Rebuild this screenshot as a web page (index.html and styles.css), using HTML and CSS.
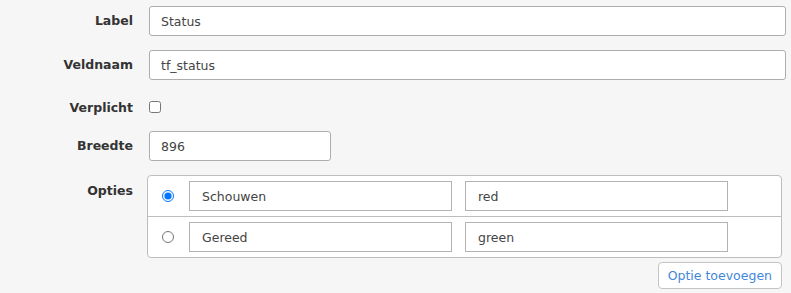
FILE: index.html
```html
<!DOCTYPE html>
<html lang="nl">
<head>
    <meta charset="UTF-8">
    <title>Veld bewerken</title>
    <link rel="stylesheet" href="styles.css">
</head>
<body>

    <form class="field-form">
        <label class="form-label" for="label">Label</label>
        <div class="form-control">
            <input id="label" class="text-input" type="text" value="Status">
        </div>

        <label class="form-label" for="veldnaam">Veldnaam</label>
        <div class="form-control">
            <input id="veldnaam" class="text-input" type="text" value="tf_status">
        </div>

        <label class="form-label check-label" for="verplicht">Verplicht</label>
        <div class="form-control check-control">
            <input id="verplicht" class="checkbox" type="checkbox">
        </div>

        <label class="form-label" for="breedte">Breedte</label>
        <div class="form-control">
            <input id="breedte" class="text-input small" type="text" value="896">
        </div>

        <div class="form-label options-label">Opties</div>
        <div class="form-control">
            <div class="options-box">
                <div class="option-row">
                    <input class="radio" type="radio" name="default" checked>
                    <input class="option-input" type="text" value="Schouwen">
                    <input class="option-input" type="text" value="red">
                </div>
                <div class="option-row">
                    <input class="radio" type="radio" name="default">
                    <input class="option-input" type="text" value="Gereed">
                    <input class="option-input" type="text" value="green">
                </div>
            </div>
            <div class="options-actions">
                <button type="button" class="btn-add">Optie toevoegen</button>
            </div>
        </div>
    </form>

</body>
</html>
```

FILE: styles.css
```css
/* Algemeen */
body {
    margin: 0;
    background: #f6f6f6;
    font-family: "DejaVu Sans", Verdana, sans-serif;
    font-size: 12.5px;
    color: #333;
}

/* Formulier */
.field-form {
    display: grid;
    grid-template-columns: 133px 1fr;
    column-gap: 16px;
    row-gap: 14px;
    padding: 6px 5px 0 0;
}

.form-label {
    font-weight: bold;
    text-align: right;
    line-height: 30px;
    color: #333;
}

.check-label {
    line-height: 15px;
    padding: 6px 0 2px;
}

.options-label {
    line-height: 15px;
    padding-top: 8px;
}

.form-control {
    min-width: 0;
}

.check-control {
    height: 23px;
    display: flex;
    align-items: flex-start;
}

/* Invoervelden */
.text-input {
    box-sizing: border-box;
    width: 100%;
    height: 30px;
    margin: 0;
    padding: 0 11px;
    border: 1px solid #adadad;
    border-radius: 3px;
    background: #fff;
    font-family: inherit;
    font-size: 12.5px;
    color: #444;
}

.text-input.small {
    width: 182px;
}

.checkbox {
    width: 12px;
    height: 12px;
    margin: 7px 0 0 0;
}

/* Opties */
.options-box {
    margin: 0 4px 0 -2px;
    border: 1px solid #bdbdbd;
    border-radius: 4px;
    background: #fff;
}

.option-row {
    display: flex;
    align-items: center;
    height: 40px;
    padding-left: 14px;
}

.option-row + .option-row {
    border-top: 1px solid #bdbdbd;
}

.radio {
    width: 12px;
    height: 12px;
    margin: 0 15px 0 0;
}

.option-input {
    box-sizing: border-box;
    width: 263px;
    height: 30px;
    margin: 0 13px 0 0;
    padding: 0 12px;
    border: 1px solid #b3b3b3;
    border-radius: 0;
    font-family: inherit;
    font-size: 12.5px;
    color: #444;
}

.options-actions {
    display: flex;
    justify-content: flex-end;
    margin: 4px 4px 0 0;
}

.btn-add {
    height: 27px;
    padding: 0 9px;
    border: 1px solid #c4c4c4;
    border-radius: 4px;
    background: #fff;
    font-family: inherit;
    font-size: 12.5px;
    color: #3f87d9;
    cursor: pointer;
}
```
